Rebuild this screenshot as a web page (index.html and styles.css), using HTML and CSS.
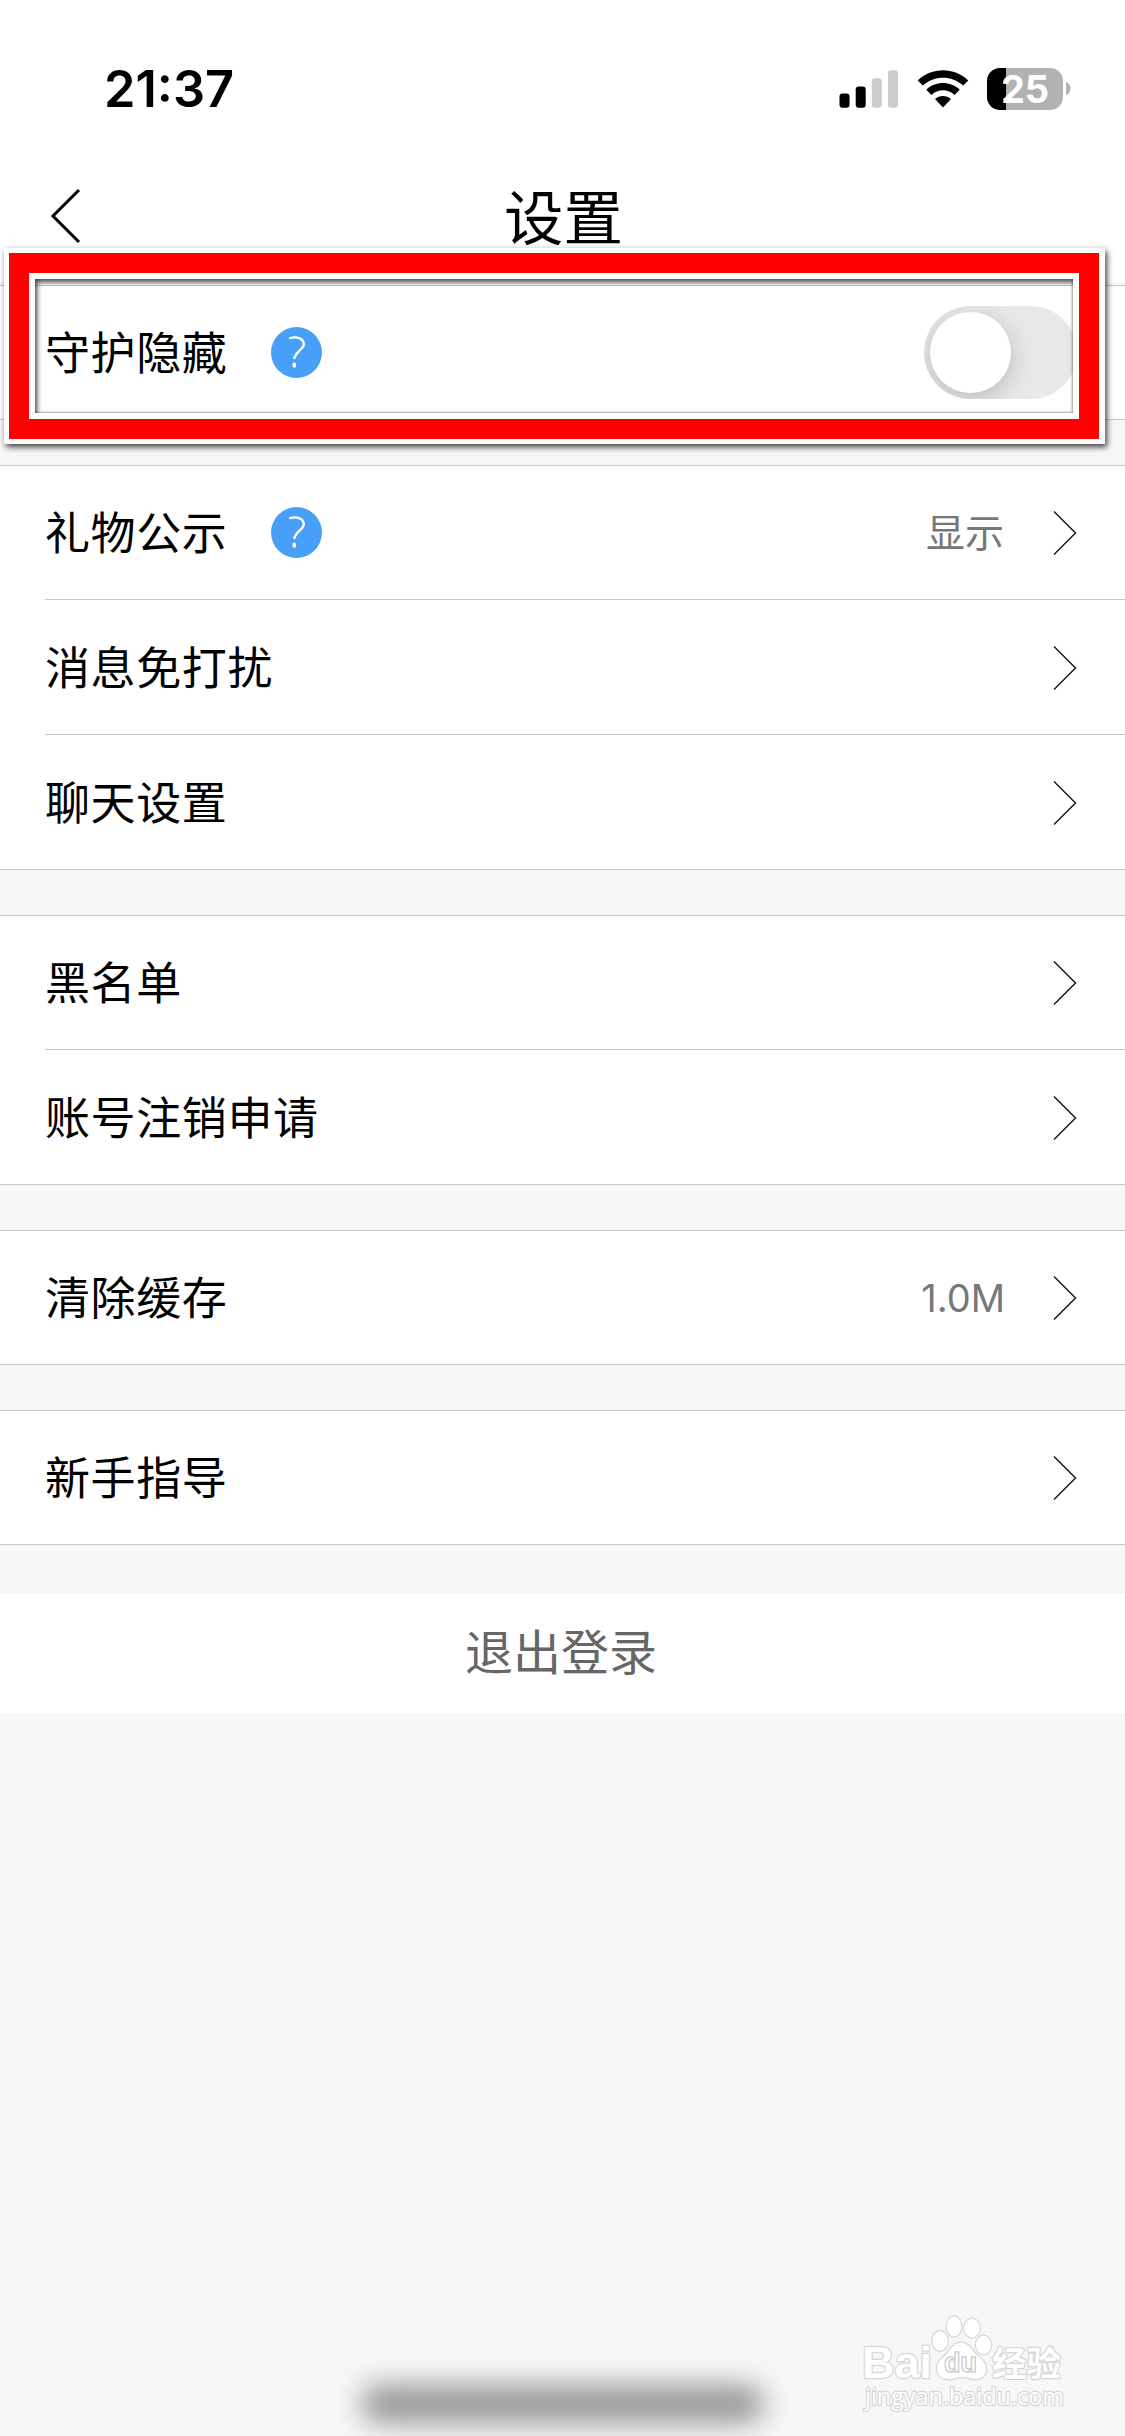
FILE: index.html
```html
<!DOCTYPE html>
<html lang="zh-CN">
<head>
<meta charset="utf-8">
<title>设置</title>
<link rel="stylesheet" href="styles.css">
</head>
<body>
<svg class="defs" width="0" height="0">
  <symbol id="chevron" viewBox="0 0 24 46"><path d="M1 1.500 L22.500 23 L1 44.500" fill="none" stroke="#111" stroke-width="1.400"/></symbol>
  <symbol id="help" viewBox="0 0 51 51"><circle cx="25.500" cy="25.500" r="25.500" fill="#479ff8"/><path d="M18.300 11.300 C26 9 33 11.500 32.800 17.500 C32.600 22.500 24 24.500 23.200 32" fill="none" stroke="#fff" stroke-width="2.400"/><rect x="21.600" y="35.800" width="3.400" height="4.600" rx="1" fill="#fff"/></symbol>
</svg>
<div class="screen">
  <header class="header">
    <div class="status">
      <span class="time">21:37</span>
      <div class="status-icons">
        <svg class="signal" width="59" height="38" viewBox="0 0 59 38">
          <rect x="0.500" y="23.500" width="10" height="14.300" rx="3"/>
          <rect x="16.700" y="16.400" width="10" height="21.400" rx="3"/>
          <rect x="32.800" y="8.300" width="10" height="29.500" rx="3" fill="#cbcbcb"/>
          <rect x="49" y="0.300" width="10" height="37.500" rx="3" fill="#cbcbcb"/>
        </svg>
        <svg class="wifi" width="52" height="38" viewBox="0 0 52 38">
          <path d="M0.700 10.500 C15 -3.200 37 -3.200 51.300 10.500 L46.200 15.600 C34.500 5 17.500 5 5.800 15.600 Z"/>
          <path d="M9.300 19.700 C18.500 10.800 33.500 10.800 42.700 19.700 L37.500 25 C31 18.800 21 18.800 14.500 25 Z"/>
          <path d="M18 29 C22.500 25 29.500 25 34 29 L26 37.500 Z"/>
        </svg>
        <div class="battery"><span>25</span></div>
        <svg class="battery-cap" width="5" height="14" viewBox="0 0 5 14"><path d="M0 0 C6 2 6 11 0 13 Z" fill="#b2b2b2"/></svg>
      </div>
    </div>
    <div class="nav">
      <svg class="back" width="32" height="56" viewBox="0 0 32 56"><path d="M29 2 L3 28 L29 54" fill="none" stroke="#000" stroke-width="3"/></svg>
      <h1>设置</h1>
    </div>
  </header>

  <main>
    <section class="group first">
      <div class="row"><span class="label">守护隐藏</span><svg class="help"><use href="#help"/></svg><span class="toggle"><i></i></span></div>
    </section>
    <section class="group">
      <div class="row"><span class="label">礼物公示</span><svg class="help"><use href="#help"/></svg><span class="value">显示</span><svg class="chevron"><use href="#chevron"/></svg></div>
      <div class="row"><span class="label">消息免打扰</span><svg class="chevron"><use href="#chevron"/></svg></div>
      <div class="row"><span class="label">聊天设置</span><svg class="chevron"><use href="#chevron"/></svg></div>
    </section>
    <section class="group">
      <div class="row"><span class="label">黑名单</span><svg class="chevron"><use href="#chevron"/></svg></div>
      <div class="row"><span class="label">账号注销申请</span><svg class="chevron"><use href="#chevron"/></svg></div>
    </section>
    <section class="group">
      <div class="row"><span class="label">清除缓存</span><span class="value latin">1.0M</span><svg class="chevron"><use href="#chevron"/></svg></div>
    </section>
    <section class="group">
      <div class="row"><span class="label">新手指导</span><svg class="chevron"><use href="#chevron"/></svg></div>
    </section>
    <div class="logout">退出登录</div>
  </main>

  <div class="highlight"><div class="highlight-red"><div class="highlight-inner"></div></div></div>
  <div class="home-indicator"></div>

  <svg class="watermark" width="220" height="125" viewBox="0 0 220 125">
    <g fill="#fff" stroke="#d6d6d6" stroke-width="2.400" paint-order="stroke" stroke-linejoin="round">
      <text class="wm-bold" x="9" y="73" font-size="45" textLength="70" lengthAdjust="spacingAndGlyphs">Bai</text>
      <ellipse cx="87" cy="36" rx="7.700" ry="9.800"/>
      <ellipse cx="101" cy="21.500" rx="7.300" ry="10"/>
      <ellipse cx="119" cy="23" rx="7.800" ry="9.300"/>
      <ellipse cx="130.500" cy="40" rx="7.600" ry="9.300"/>
      <path d="M84 63 C84 55 90 54 96 46 C103 35 113 35 120 46 C125 53 133 55 133 64 C133 72 127 75 120 74 C111 71 106 72 99 74 C90 75 84 72 84 63 Z"/>
      <text class="wm-cjk" x="139" y="71" font-size="34" textLength="69" lengthAdjust="spacingAndGlyphs">经验</text>
      <text class="wm-url" x="12" y="100" font-size="24" textLength="199" lengthAdjust="spacingAndGlyphs">jingyan.baidu.com</text>
    </g>
    <text class="wm-bold" x="91" y="67" font-size="28" textLength="33" lengthAdjust="spacingAndGlyphs" fill="#fff" stroke="#cfcfcf" stroke-width="1.500">du</text>
  </svg>
</div>
</body>
</html>
```
FILE: styles.css
```css
* { box-sizing: border-box; }
body {
  margin: 0;
  background: #f7f7f7;
  color: #000;
  font-family: Inter, "Noto Sans CJK SC", sans-serif;
}
.defs { display: none; }
.screen {
  position: relative;
  width: 1125px;
  height: 2436px;
  overflow: hidden;
  background: #f7f7f7;
}
.header {
  height: 282px;
  background: #fff;
}
.status {
  display: flex;
  align-items: center;
  justify-content: space-between;
  height: 150px;
  padding: 28px 54px 0 104px;
}
.time {
  font-size: 50.5px;
  font-weight: 600;
  line-height: 60px;
}
.status-icons {
  display: flex;
  align-items: center;
}
.wifi { margin-left: 19px; }
.battery {
  display: flex;
  align-items: center;
  justify-content: center;
  width: 76px;
  height: 42px;
  margin-left: 18px;
  border-radius: 13px;
  background: linear-gradient(90deg, #000 19.5px, #b2b2b2 19.5px);
  color: #fff;
  font-size: 38px;
  font-weight: 700;
  line-height: 42px;
}
.battery-cap { margin-left: 3px; }
.nav {
  display: grid;
  grid-template-columns: 130px 1fr 130px;
  align-items: center;
  height: 132px;
}
.back { margin-left: 50px; }
.nav h1 {
  margin: 0;
  padding: 4px 0 0 2px;
  font-size: 59.5px;
  font-weight: 400;
  line-height: 80px;
  text-align: center;
}
.group {
  margin-top: 45px;
  border-top: 1px solid #c8c8c8;
  border-bottom: 1px solid #c8c8c8;
  background: #fff;
}
.group.first { margin-top: 3px; }
.row {
  display: flex;
  align-items: center;
  height: 133px;
  margin-left: 45px;
  padding-right: 48px;
}
.row + .row {
  height: 135px;
  padding-top: 1px;
  border-top: 1px solid #c8c8c8;
}
.label {
  padding-top: 2px;
  font-size: 45px;
  line-height: 60px;
  letter-spacing: 0.6px;
}
.help {
  width: 51px;
  height: 51px;
  margin-left: 44px;
}
.value {
  margin-left: auto;
  color: #77777b;
  font-size: 39px;
  line-height: 50px;
}
.chevron {
  width: 24px;
  height: 46px;
  margin-left: auto;
}
.value + .chevron { margin-left: 49px; }
.value + .chevron, .label + .chevron { flex: none; }
.value.latin {
  margin-right: -1px;
  font-size: 38px;
}
.toggle {
  width: 153px;
  height: 93px;
  margin-left: auto;
  padding: 6px;
  overflow: hidden;
  border-radius: 47px;
  background: #e8e8e8;
}
.toggle i {
  display: block;
  width: 81px;
  height: 81px;
  border-radius: 50%;
  background: #fff;
  box-shadow: 0 6px 24px rgba(0, 0, 0, 0.2);
}
.logout {
  height: 120px;
  margin-top: 48px;
  padding-right: 3px;
  background: #fff;
  color: #666;
  font-size: 48px;
  line-height: 120px;
  text-align: center;
}
.highlight {
  position: absolute;
  left: 4px;
  top: 248px;
  width: 1101px;
  height: 196px;
  border: solid #fff;
  border-width: 5px 6px 5px 5px;
  box-shadow: 2px 3px 6px rgba(0, 0, 0, 0.75);
}
.highlight-red {
  height: 100%;
  border: 20px solid #f00;
}
.highlight-inner {
  height: 100%;
  border: 6px solid #fff;
  position: relative;
}
.highlight-inner::after {
  position: absolute;
  inset: 0;
  box-shadow: inset 2px 3px 5px rgba(0, 0, 0, 0.75), inset -1px -1px 2px rgba(0, 0, 0, 0.25);
  content: "";
}
.home-indicator {
  position: absolute;
  left: 362px;
  top: 2385px;
  width: 401px;
  height: 38px;
  border-radius: 16px;
  background: #969696;
  filter: blur(14px);
}
.watermark {
  position: absolute;
  left: 853px;
  top: 2305px;
}
.wm-bold { font-family: "Liberation Sans", sans-serif; font-weight: 700; }
.wm-cjk { font-family: "Noto Sans CJK SC", sans-serif; font-weight: 700; }
.wm-url { font-family: "Open Sans", sans-serif; font-weight: 400; }
```
